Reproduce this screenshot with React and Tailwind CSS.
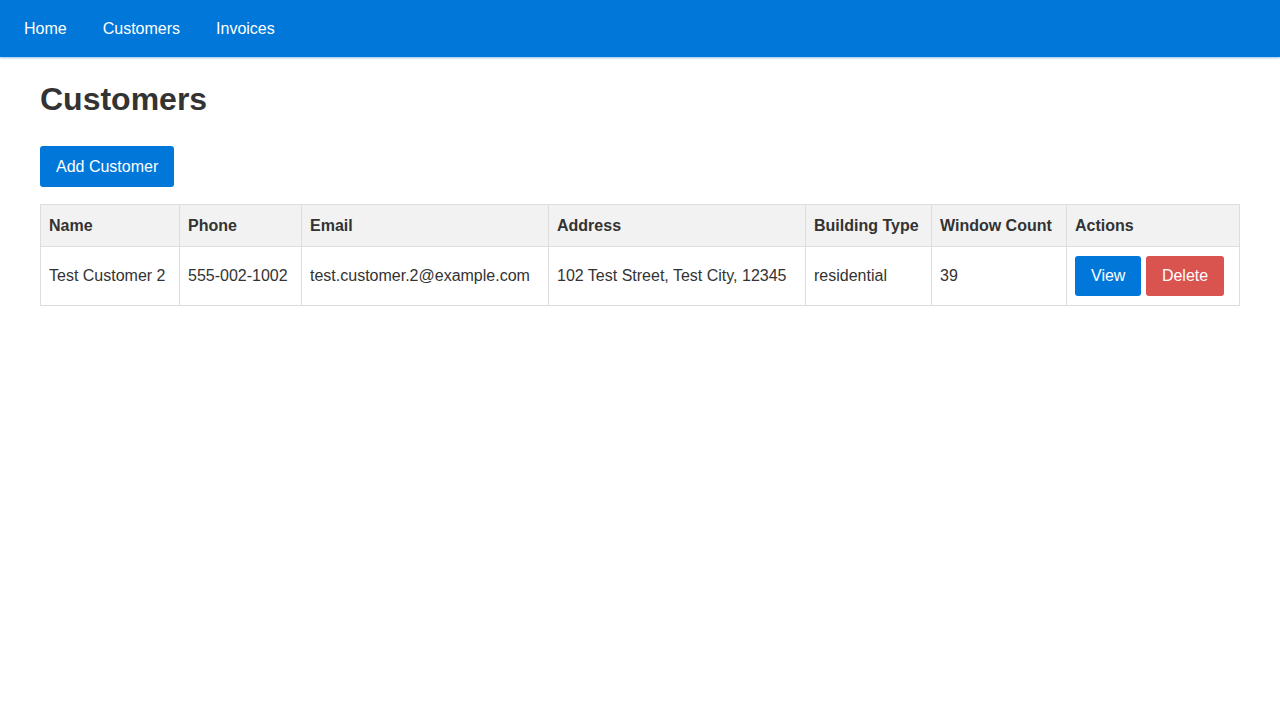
const COLUMNS = [
  { label: "Name", width: "w-[139px]" },
  { label: "Phone", width: "w-[122px]" },
  { label: "Email", width: "w-[247px]" },
  { label: "Address", width: "w-[257px]" },
  { label: "Building Type", width: "w-[126px]" },
  { label: "Window Count", width: "w-[135px]" },
  { label: "Actions", width: "w-[173px]" },
];

const CUSTOMERS = [
  {
    id: 2,
    name: "Test Customer 2",
    phone: "555-002-1002",
    email: "test.customer.2@example.com",
    address: "102 Test Street, Test City, 12345",
    buildingType: "residential",
    windowCount: 39,
  },
];

function NavBar() {
  return (
    <nav className="flex h-[57px] items-center bg-[#0077d9] pl-[6px] shadow-[0_1px_2px_rgba(0,119,217,0.45)]">
      {["Home", "Customers", "Invoices"].map((item) => (
        <a key={item} href="#" className="px-[18px] text-[16px] text-white">
          {item}
        </a>
      ))}
    </nav>
  );
}

export default function App() {
  return (
    <div className="min-h-[720px] bg-white font-['Liberation_Sans',Arial,sans-serif] text-[#333]">
      <NavBar />
      <main className="px-10">
        <h1 className="mt-[24px] text-[32px] font-bold leading-[37px]">Customers</h1>
        <button
          type="button"
          className="mt-[28px] rounded-[3px] bg-[#0077d9] px-4 py-2.5 text-[16px] leading-[21px] text-white"
        >
          Add Customer
        </button>
        <table className="mt-[17px] w-full table-fixed border-collapse text-[16px]">
          <thead>
            <tr className="bg-[#f2f2f2]">
              {COLUMNS.map((col) => (
                <th
                  key={col.label}
                  className={`${col.width} border border-[#ddd] px-2 py-[11.5px] text-left font-bold leading-[18px]`}
                >
                  {col.label}
                </th>
              ))}
            </tr>
          </thead>
          <tbody>
            {CUSTOMERS.map((c) => (
              <tr key={c.id}>
                <td className="border border-[#ddd] px-2 py-[9px] whitespace-nowrap">{c.name}</td>
                <td className="border border-[#ddd] px-2 py-[9px] whitespace-nowrap">{c.phone}</td>
                <td className="border border-[#ddd] px-2 py-[9px] whitespace-nowrap">{c.email}</td>
                <td className="border border-[#ddd] px-2 py-[9px] whitespace-nowrap">{c.address}</td>
                <td className="border border-[#ddd] px-2 py-[9px]">{c.buildingType}</td>
                <td className="border border-[#ddd] px-2 py-[9px]">{c.windowCount}</td>
                <td className="border border-[#ddd] px-2 py-[9px]">
                  <div className="flex gap-[5px]">
                    <button
                      type="button"
                      className="rounded-[3px] bg-[#0077d9] px-4 py-2.5 leading-5 text-white"
                    >
                      View
                    </button>
                    <button
                      type="button"
                      className="rounded-[3px] bg-[#d9534f] px-[15.5px] py-2.5 leading-5 text-white"
                    >
                      Delete
                    </button>
                  </div>
                </td>
              </tr>
            ))}
          </tbody>
        </table>
      </main>
    </div>
  );
}
